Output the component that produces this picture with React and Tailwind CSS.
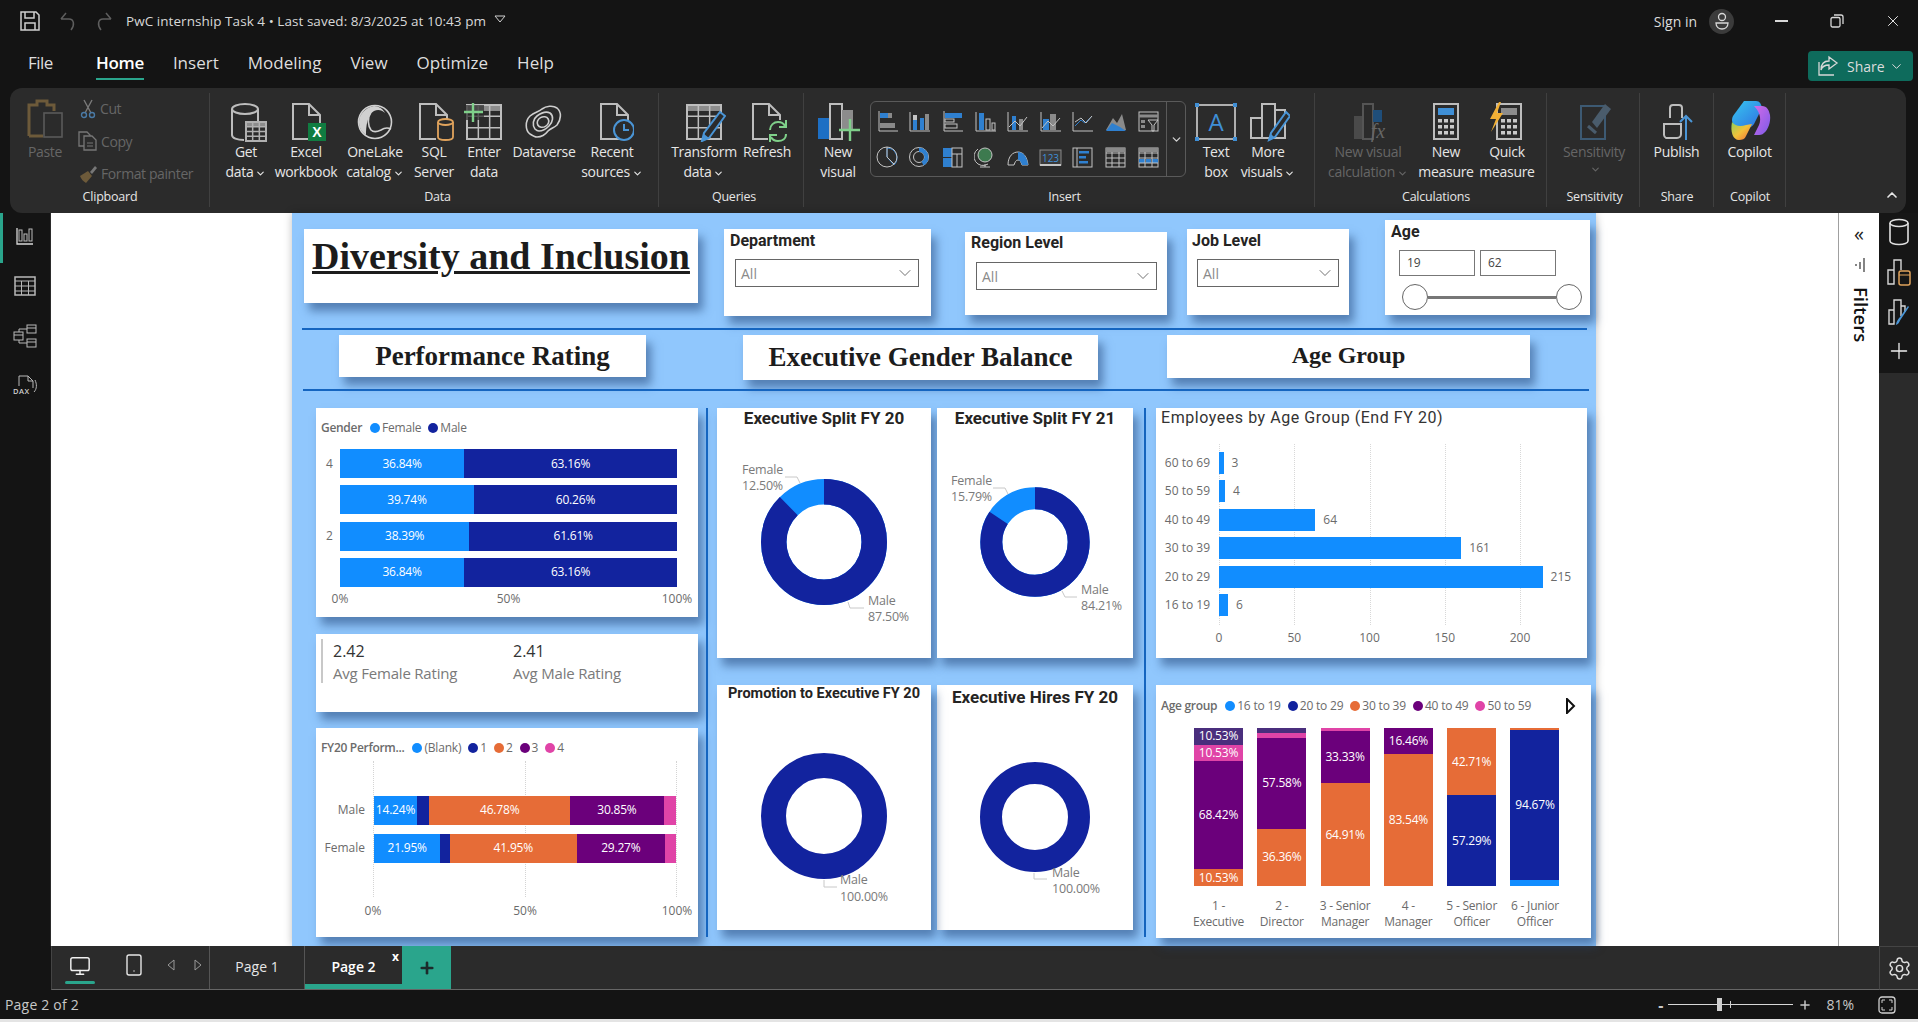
import React from 'react';
import { ChevronDown, ChevronUp, Monitor, Smartphone, Settings, Plus, X } from 'lucide-react';

const BLUE = '#118DFF';
const NAVY = '#12239E';
const ORANGE = '#E66C37';
const PURPLE = '#6B007B';
const PINK = '#E044A7';
const SLATE = '#4A2E7D';

const LINE = '#bdbdbd';
const ACC = '#3f8fd6';

const cardShadow = 'shadow-[5px_8px_9px_rgba(35,70,120,0.55)]';

function Doc({ x = 8 }) {
    return <path d={`M${x} 2h16l11 11v24H${x}z M${x + 16} 2v11h11`} fill="none" stroke={LINE} strokeWidth="2" />;
}

function GridLines({ x, y, w, h, cols = 3, rows = 3, color = LINE }) {
    const out = [];
    for (let i = 1; i < cols; i++) out.push(<path key={'c' + i} d={`M${x + (w * i) / cols} ${y}v${h}`} stroke={color} strokeWidth="1.5" />);
    for (let i = 1; i < rows; i++) out.push(<path key={'r' + i} d={`M${x} ${y + (h * i) / rows}h${w}`} stroke={color} strokeWidth="1.5" />);
    return <g>{out}<rect x={x} y={y} width={w} height={h} fill="none" stroke={color} strokeWidth="2" /></g>;
}

function Ico({ children, w = 44 }) {
    return <svg width={w} height="40" viewBox={`0 0 ${w} 40`} fill="none" className="block">{children}</svg>;
}

const icons = {
    getData: (
        <Ico>
            <ellipse cx="21" cy="7" rx="13" ry="5" stroke={LINE} strokeWidth="2" />
            <path d="M8 7v26c0 3 5 5 12 5" stroke={LINE} strokeWidth="2" />
            <path d="M34 7v12" stroke={LINE} strokeWidth="2" />
            <rect x="22" y="20" width="20" height="19" fill="#2b2b2b" />
            <rect x="22" y="20" width="20" height="5" fill="#8c8c8c" />
            <GridLines x={22} y={20} w={20} h={19} cols={3} rows={4} color="#b0b0b0" />
        </Ico>
    ),
    excel: (
        <Ico>
            <Doc x={9} />
            <rect x="24" y="21" width="18" height="18" fill="#107c41" />
            <text x="33" y="35" textAnchor="middle" fontSize="14" fontWeight="700" fill="#fff" fontFamily="Liberation Sans">X</text>
        </Ico>
    ),
    oneLake: (
        <Ico>
            <circle cx="22" cy="20" r="16.5" stroke="#d0d0d0" strokeWidth="1.6" />
            <path d="M21 4c-8 1-15 8-15 16 0 6 3 10 7 13 0-8 1-20 8-24 4-2 8-1 11 2-2-4-6-7-11-7z" fill="#d0d0d0" />
            <path d="M18 10c-4 6-3 14 0 18 3 3 6 2 10 0 3-2 6-3 10-1" stroke="#d0d0d0" strokeWidth="1.6" />
        </Ico>
    ),
    sql: (
        <Ico>
            <Doc x={8} />
            <rect x="24" y="17" width="19" height="23" fill="#2b2b2b" />
            <ellipse cx="33.5" cy="20" rx="7.5" ry="3" stroke="#e0a35c" strokeWidth="1.8" />
            <path d="M26 20v15c0 2 3 3 7.5 3s7.500-1 7.500-3V20" stroke="#e0a35c" strokeWidth="1.8" />
        </Ico>
    ),
    enter: (
        <Ico>
            <rect x="5" y="3" width="34" height="6" fill="#8c8c8c" />
            <GridLines x={5} y={3} w={34} h={34} cols={3} rows={3} />
            <rect x="2" y="3" width="20" height="15" fill="#2b2b2b" opacity="0.7" />
            <path d="M11 1v19M2 10h19" stroke="#7fd08a" strokeWidth="2.4" />
        </Ico>
    ),
    dataverse: (
        <Ico>
            <path d="M8 32C3 28 3 19 8 14c4-4 9-4 12-7 4-3 11-4 15-1 5 4 4 12 0 17-3 3-6 3-9 6-3 4-7 6-11 6-2 0-4-1-7-3z" stroke="#cfcfcf" strokeWidth="1.6" />
            <path d="M13 27c-3-4-2-10 2-13 4-3 9-5 13-3 4 3 3 9-1 13-3 3-7 5-10 5-1 0-3-1-4-2z" stroke="#cfcfcf" strokeWidth="1.6" />
            <ellipse cx="21" cy="20" rx="6" ry="5" stroke="#cfcfcf" strokeWidth="1.6" transform="rotate(-30 21 20)" />
        </Ico>
    ),
    recent: (
        <Ico>
            <Doc x={11} />
            <circle cx="34" cy="28" r="10" fill="#2b2b2b" stroke="#4a95d6" strokeWidth="2" />
            <path d="M34 22v6h5" stroke="#4a95d6" strokeWidth="2" />
        </Ico>
    ),
    transform: (
        <Ico>
            <rect x="5" y="3" width="34" height="6" fill="#8c8c8c" />
            <GridLines x={5} y={3} w={34} h={34} cols={3} rows={3} />
            <path d="M38 10l5 4-16 22-7 3 2-8z" fill="#2b2b2b" stroke="#4a95d6" strokeWidth="2" />
            <path d="M20 39l2-7 5 4z" fill="#4a95d6" />
        </Ico>
    ),
    refresh: (
        <Ico>
            <Doc x={8} />
            <rect x="23" y="18" width="21" height="22" fill="#2b2b2b" />
            <path d="M25 28c0-5 4-8 8-8 3 0 6 2 7 4M41 32c0 5-4 7-8 7-3 0-6-2-7-4" stroke="#7fd08a" strokeWidth="2" />
            <path d="M41 18v7h-7M25 40v-7h7" stroke="#7fd08a" strokeWidth="2" />
        </Ico>
    ),
    newVisual: (
        <Ico>
            <rect x="2" y="16" width="12" height="21" fill="#1d6fc4" />
            <rect x="14" y="2" width="12" height="35" stroke={LINE} strokeWidth="2" />
            <rect x="26" y="8" width="11" height="20" fill="#8c8c8c" />
            <path d="M34 17v22M23 28h21" stroke="#7fd08a" strokeWidth="2.4" />
        </Ico>
    ),
    textBox: (
        <Ico>
            <rect x="3" y="3" width="38" height="34" stroke="#d0d0d0" strokeWidth="1.6" />
            <rect x="1" y="1" width="4" height="4" fill={ACC} />
            <rect x="39" y="1" width="4" height="4" fill={ACC} />
            <rect x="1" y="35" width="4" height="4" fill={ACC} />
            <rect x="39" y="35" width="4" height="4" fill={ACC} />
            <text x="22" y="29" textAnchor="middle" fontSize="24" fill={ACC} fontFamily="Open Sans">A</text>
        </Ico>
    ),
    moreVisuals: (
        <Ico>
            <path d="M5 36V16h11V36zM16 36V2h13v34M29 8h10v28H16" stroke={LINE} strokeWidth="2" />
            <path d="M40 10l4 4-15 21-6 3 2-7z" fill="#2b2b2b" stroke="#4a95d6" strokeWidth="2" />
            <path d="M23 39l2-7 4 4z" fill="#4a95d6" />
        </Ico>
    ),
    calcVisual: (
        <Ico>
            <rect x="8" y="14" width="9" height="23" fill="#4a4a4a" />
            <rect x="17" y="2" width="10" height="35" stroke="#555" strokeWidth="2" />
            <rect x="27" y="8" width="9" height="12" fill="#1f4e7a" />
            <text x="32" y="36" textAnchor="middle" fontSize="20" fontStyle="italic" fill="#666" fontFamily="Liberation Serif">fx</text>
        </Ico>
    ),
    measure: (
        <Ico>
            <rect x="10" y="2" width="24" height="35" stroke={LINE} strokeWidth="2" />
            <rect x="14" y="6" width="16" height="7" fill={ACC} />
            {[17, 23, 29].map(y => [14, 20, 26].map(x => <rect key={x + '-' + y} x={x} y={y} width="4" height="3.500" fill="#c9c9c9" />))}
        </Ico>
    ),
    quick: (
        <Ico>
            <rect x="12" y="2" width="24" height="35" stroke={LINE} strokeWidth="2" />
            <rect x="16" y="6" width="16" height="7" fill="#8c8c8c" />
            {[17, 23, 29].map(y => [16, 22, 28].map(x => <rect key={x + '-' + y} x={x} y={y} width="4" height="3.500" fill="#c9c9c9" />))}
            <path d="M14 0L5 17h6L6 30 18 11h-6l4-11z" fill="#f2b035" />
        </Ico>
    ),
    sensitivity: (
        <Ico>
            <path d="M9 4h24v33H9z" stroke="#3d5a73" strokeWidth="2" />
            <path d="M20 20L33 2l6 5-14 19z" fill="#4a5c6c" />
            <path d="M16 24l8 7" stroke="#4a5c6c" strokeWidth="3" />
        </Ico>
    ),
    publish: (
        <Ico>
            <path d="M15 16V6a3 3 0 013-3h6a3 3 0 013 3v10" stroke={LINE} strokeWidth="2" />
            <path d="M9 22h17v10a4 4 0 01-4 4H11a4 4 0 01-2-3z" stroke={LINE} strokeWidth="2" />
            <path d="M31 38V14M25 20l6-6 6 6" stroke="#4a95d6" strokeWidth="2" />
        </Ico>
    ),
    copilot: (
        <svg width="44" height="42" viewBox="0 0 44 42" className="block">
            <defs>
                <linearGradient id="cpA" x1="0" y1="0" x2="1" y2="1">
                    <stop offset="0" stopColor="#37c7f0" />
                    <stop offset="1" stopColor="#2f6fe0" />
                </linearGradient>
                <linearGradient id="cpB" x1="0" y1="0" x2="1" y2="1">
                    <stop offset="0" stopColor="#d36be8" />
                    <stop offset="1" stopColor="#7b5be8" />
                </linearGradient>
                <linearGradient id="cpC" x1="0" y1="0" x2="1" y2="1">
                    <stop offset="0" stopColor="#8fd05a" />
                    <stop offset="0.5" stopColor="#f2c13a" />
                    <stop offset="1" stopColor="#ef6a3a" />
                </linearGradient>
            </defs>
            <path d="M16 1h12c4 0 5 3 6 7l-8 16c-2 3-5 4-8 4H8C4 24 3 20 5 16z" fill="url(#cpA)" />
            <path d="M26 6h8c5 0 7 4 8 9 1 7-2 15-6 18-2 2-4 2-7 2h-3l5-10c3-7 0-14-5-19z" fill="url(#cpB)" />
            <path d="M4 22c3 4 8 5 14 3l6-1-6 12c-1 3-4 4-7 4-6 0-9-8-7-18z" fill="url(#cpC)" />
        </svg>
    ),
};

function RibbonButton({ icon, lines, caret, className, dim }) {
    return (
        <div className={`flex flex-col items-center shrink-0 ${className}`}>
            <div className="h-[44px] flex items-end justify-center">{icons[icon]}</div>
            <div className={`flex flex-col items-center text-[14px] leading-[20px] whitespace-nowrap ${dim ? 'text-[#666]' : 'text-[#e6e6e6]'}`}>
                <span className="tracking-[-0.3px]">{lines[0]}</span>
                <span className="tracking-[-0.3px] flex items-center">
                    {lines[1]}
                    {caret && <ChevronDown size={11} strokeWidth={2.5} className="ml-[2px] mt-[2px]" />}
                </span>
            </div>
        </div>
    );
}

function RibbonGroup({ label, className, children }) {
    return (
        <div className={`relative h-full shrink-0 ${className}`}>
            <div className="flex h-[100px] pt-[10px]">{children}</div>
            <div className="text-[12.5px] leading-[18px] text-center text-[#e6e6e6] tracking-[-0.2px]">{label}</div>
            <div className="absolute right-0 top-[5px] bottom-[6px] w-px bg-[#404040]" />
        </div>
    );
}

function GalleryIcon({ i }) {
    const g = '#8a8a8a';
    const l = '#c4c4c4';
    const b = '#2f80d0';
    const all = [
        <g key="0"><path d="M3 1v20h19" stroke={l} /><rect x="4" y="3" width="8" height="5" fill={b} /><rect x="12" y="3" width="4" height="5" fill={g} /><rect x="4" y="13" width="5" height="5" fill={g} /><rect x="9" y="13" width="10" height="5" fill={g} /></g>,
        <g key="1"><path d="M2 2v19h20" stroke={l} /><rect x="5" y="10" width="4" height="10" fill={b} /><rect x="5" y="5" width="4" height="5" fill={l} /><rect x="12" y="8" width="4" height="12" fill={b} /><rect x="17" y="4" width="4" height="16" fill={g} /></g>,
        <g key="2"><path d="M3 1v20h19" stroke={l} /><rect x="4" y="3" width="17" height="5" fill={b} /><rect x="4" y="9" width="9" height="3" stroke={l} /><rect x="4" y="14" width="12" height="4" stroke={l} /></g>,
        <g key="3"><path d="M2 2v19h20" stroke={l} /><rect x="5" y="3" width="5" height="17" fill={b} /><rect x="12" y="9" width="4" height="11" stroke={l} /><rect x="18" y="13" width="3" height="7" stroke={l} /></g>,
        <g key="4"><path d="M2 2v19h20" stroke={l} /><rect x="6" y="6" width="4" height="14" fill={b} /><rect x="13" y="9" width="4" height="11" fill={g} /><path d="M3 17l6-6 5 5 7-9" stroke={l} /></g>,
        <g key="5"><path d="M2 2v19h20" stroke={l} /><rect x="4" y="9" width="6" height="11" fill={b} /><rect x="11" y="4" width="6" height="16" fill={g} /><path d="M3 18l6-7 5 5 7-8" stroke={l} /></g>,
        <g key="6"><path d="M2 2v19h20" stroke={l} /><path d="M4 16l6-6 4 3 7-7" stroke={b} /><path d="M4 12l6-4 5 5 6-7" stroke={l} /></g>,
        <g key="7"><path d="M2 20L9 8l4 5 5-9 4 16z" fill={g} /><path d="M2 21l6-8 4 2 4 2 6 4z" fill={b} /></g>,
        <g key="8"><rect x="2" y="2" width="19" height="19" stroke={l} /><path d="M2 6h19" stroke={g} strokeWidth="3" /><path d="M11 10h10l-4 5v6h-2v-6z" stroke={l} /><rect x="4" y="10" width="4" height="3" fill={g} /><rect x="4" y="15" width="4" height="3" fill={g} /></g>,
        <g key="9"><path d="M11 11V2a10 10 0 017 17z" stroke={b} /><circle cx="11" cy="11" r="10" stroke={l} /><path d="M11 1v10l7 7" stroke={l} /></g>,
        <g key="10"><circle cx="11" cy="11" r="9.500" stroke={l} /><circle cx="11" cy="11" r="5.500" stroke={l} /><path d="M11 1.500a9.500 9.500 0 019.500 9.500 9.500 9.500 0 01-5 8.500l-2-4a5 5 0 00-2.500-9.500z" fill={b} /></g>,
        <g key="11"><rect x="2" y="2" width="9" height="9" fill={b} /><rect x="2" y="12" width="9" height="9" fill={b} /><rect x="11" y="2" width="10" height="19" stroke={l} /><path d="M11 8h10M16 8v13" stroke={l} /></g>,
        <g key="12"><circle cx="11" cy="9" r="7" fill="#3d7a4f" stroke={l} /><path d="M4 3a9 9 0 0010 15M11 18v3M6 21h10" stroke={l} /></g>,
        <g key="13"><path d="M2 19c0-9 5-13 10-13s9 4 10 13h-6c-1-3-2-5-4-5s-3 2-4 5z" stroke={l} /><path d="M12 6c5 0 9 4 10 13h-6c-1-3-2-5-4-5z" fill={b} /></g>,
        <g key="14"><rect x="1" y="4" width="21" height="15" fill="#3a3a3a" stroke={g} /><path d="M1 19h21" stroke={l} strokeWidth="2" /><text x="11.500" y="16" textAnchor="middle" fontSize="10" fill={ACC} fontFamily="Open Sans">123</text></g>,
        <g key="15"><rect x="2" y="2" width="19" height="19" stroke={l} /><path d="M6 2v19" stroke={l} /><rect x="8" y="5" width="10" height="2.500" fill={b} /><rect x="8" y="10" width="7" height="2.500" fill={b} /><rect x="8" y="15" width="9" height="2.500" fill={b} /></g>,
        <g key="16"><rect x="2" y="2" width="19" height="19" stroke={l} /><path d="M2 7h19M2 12h19M2 17h19M8 2v19M15 2v19" stroke={l} /><rect x="2" y="2" width="19" height="4" fill={g} /></g>,
        <g key="17"><rect x="2" y="2" width="19" height="19" stroke={l} /><rect x="2" y="2" width="19" height="4" fill={g} /><rect x="2" y="13" width="6" height="4" fill={b} /><rect x="9" y="13" width="5" height="4" fill={b} /><rect x="15" y="13" width="6" height="4" fill={b} /><path d="M2 7h19M2 12h19M2 17h19M8 6v15M15 6v15" stroke={l} /></g>,
    ];
    return <svg width="23" height="23" viewBox="0 0 23 23" fill="none" className="block">{all[i]}</svg>;
}

function Ribbon() {
    return (
        <div className="ml-[10px] w-[1896px] h-[125px] rounded-xl bg-[#2b2b2b] flex shrink-0">
            <RibbonGroup label="Clipboard" className="w-[200px]">
                <div className="flex text-[#666] text-[14px]">
                    <div className="w-[70px] flex flex-col items-center">
                        <svg width="38" height="42" viewBox="0 0 38 42" fill="none" className="block">
                            <path d="M3 38V7h8V3h10v4h7v6" stroke="#6d5a3a" strokeWidth="3" />
                            <path d="M3 38h14" stroke="#6d5a3a" strokeWidth="3" />
                            <rect x="18" y="15" width="18" height="24" stroke="#5a5a5a" strokeWidth="1.6" />
                        </svg>
                        <span className="mt-[2px] leading-[20px] tracking-[-0.3px]">Paste</span>
                    </div>
                    <div className="flex flex-col gap-[11.500px] tracking-[-0.4px]">
                        <div className="flex items-center gap-[4px] h-[21px]">
                            <svg width="16" height="20" viewBox="0 0 16 20" fill="none" className="block"><path d="M4 1l7 13M12 1L5 14" stroke="#7a7a7a" strokeWidth="1.4" /><circle cx="4" cy="16" r="2.500" stroke="#4a7aa6" strokeWidth="1.4" /><circle cx="12" cy="16" r="2.500" stroke="#4a7aa6" strokeWidth="1.4" /></svg>
                            <span>Cut</span>
                        </div>
                        <div className="flex items-center gap-[3px] -ml-[2px] h-[21px]">
                            <svg width="20" height="20" viewBox="0 0 20 20" fill="none" className="block"><path d="M1 1h8l3 3v11H1z" stroke="#777" strokeWidth="1.3" /><path d="M6 5h8l4 4v10H6z" fill="#2b2b2b" stroke="#777" strokeWidth="1.3" /><path d="M9 12h6M9 15h6" stroke="#777" /></svg>
                            <span>Copy</span>
                        </div>
                        <div className="flex items-center gap-[3px] -ml-[2px] h-[21px]">
                            <svg width="20" height="20" viewBox="0 0 20 20" fill="none" className="block"><path d="M12 8l5-6 2 2-5 6z" fill="#777" /><path d="M2 12l8-5 4 5-6 7c-3-2-5-4-6-7z" fill="#6d5a3a" /></svg>
                            <span className="whitespace-nowrap">Format painter</span>
                        </div>
                    </div>
                </div>
            </RibbonGroup>

            <RibbonGroup label="Data" className="w-[449px] pl-[6px]">
                <RibbonButton icon="getData" lines={['Get', 'data']} caret className="w-[60px]" />
                <RibbonButton icon="excel" lines={['Excel', 'workbook']} className="w-[60px]" />
                <RibbonButton icon="oneLake" lines={['OneLake', 'catalog']} caret className="w-[78px]" />
                <RibbonButton icon="sql" lines={['SQL', 'Server']} className="w-[40px]" />
                <RibbonButton icon="enter" lines={['Enter', 'data']} className="w-[60px]" />
                <RibbonButton icon="dataverse" lines={['Dataverse', '']} className="w-[60px]" />
                <RibbonButton icon="recent" lines={['Recent', 'sources']} caret className="w-[76px]" />
            </RibbonGroup>

            <RibbonGroup label="Queries" className="w-[145px] pl-[5px]">
                <RibbonButton icon="transform" lines={['Transform', 'data']} caret className="w-[80px]" />
                <RibbonButton icon="refresh" lines={['Refresh', '']} className="w-[46px]" />
            </RibbonGroup>

            <RibbonGroup label="Insert" className="w-[511px] pl-[10px]">
                <RibbonButton icon="newVisual" lines={['New', 'visual']} className="w-[48px]" />
                <div className="ml-[8px] mt-[3px] w-[316px] h-[76px] rounded-md border border-[#5a5a5a] flex shrink-0">
                    <div className="grid grid-cols-[repeat(9,32.6px)] grid-rows-2 place-items-center w-[295px] py-[1px]">
                        {Array.from({ length: 18 }, (_, i) => <GalleryIcon key={i} i={i} />)}
                    </div>
                    <div className="flex-1 border-l border-[#5a5a5a] flex items-center justify-center">
                        <ChevronDown size={13} strokeWidth={2.5} color="#d0d0d0" />
                    </div>
                </div>
                <RibbonButton icon="textBox" lines={['Text', 'box']} className="w-[40px] ml-[10px]" />
                <RibbonButton icon="moreVisuals" lines={['More', 'visuals']} caret className="w-[64px]" />
            </RibbonGroup>

            <RibbonGroup label="Calculations" className="w-[232px] pl-[10px]">
                <RibbonButton icon="calcVisual" lines={['New visual', 'calculation']} caret dim className="w-[86px]" />
                <RibbonButton icon="measure" lines={['New', 'measure']} className="w-[70px]" />
                <RibbonButton icon="quick" lines={['Quick', 'measure']} className="w-[52px]" />
            </RibbonGroup>

            <RibbonGroup label="Sensitivity" className="w-[93px] pl-[2px]">
                <RibbonButton icon="sensitivity" lines={['Sensitivity', '']} caret dim className="w-[90px]" />
            </RibbonGroup>

            <RibbonGroup label="Share" className="w-[74px]">
                <RibbonButton icon="publish" lines={['Publish', '']} className="w-[73px]" />
            </RibbonGroup>

            <RibbonGroup label="Copilot" className="w-[72px]">
                <RibbonButton icon="copilot" lines={['Copilot', '']} className="w-[71px]" />
            </RibbonGroup>

            <div className="flex-1 flex items-end justify-end pb-[10px] pr-[6px]">
                <ChevronUp size={16} strokeWidth={2.5} color="#e6e6e6" />
            </div>
        </div>
    );
}

function TitleBar() {
    return (
        <div className="h-[44px] flex items-center shrink-0 text-[#e6e6e6] relative pb-[2px]">
            <svg width="20" height="20" viewBox="0 0 20 20" fill="none" className="ml-[20px] block"><path d="M1 1h15l3 3v15H1z" stroke="#d0d0d0" strokeWidth="1.5" /><path d="M5 1v6h9V1M5 19v-7h10v7" stroke="#d0d0d0" strokeWidth="1.5" /></svg>
            <svg width="18" height="20" viewBox="0 0 18 20" fill="none" className="ml-[19px] block"><path d="M2 8l5-6M2 8h8c5 0 6 6 2 11" stroke="#5e5e5e" strokeWidth="1.500" /></svg>
            <svg width="18" height="20" viewBox="0 0 18 20" fill="none" className="ml-[18px] block"><path d="M16 8l-5-6M16 8H8C3 8 2 14 6 19" stroke="#5e5e5e" strokeWidth="1.500" /></svg>
            <span className="ml-[13px] text-[13.5px] text-[#d8d8d8] tracking-[0.05px] whitespace-nowrap">PwC internship Task 4 • Last saved: 8/3/2025 at 10:43 pm</span>
            <svg width="12" height="8" viewBox="0 0 12 8" fill="none" className="ml-[8px] mb-[4px] block"><path d="M1 1h10L6 7z" stroke="#d0d0d0" /></svg>
            <div className="ml-auto flex items-center">
                <span className="text-[14px] text-[#dcdcdc] mr-[12px]">Sign in</span>
                <div className="w-[25px] h-[25px] rounded-full bg-[#3b3b3b] flex items-center justify-center">
                    <svg width="14" height="18" viewBox="0 0 14 18" fill="none" className="block"><circle cx="7" cy="5" r="3.500" stroke="#d8d8d8" strokeWidth="1.300" /><path d="M1 11h12c0 4-3 6-6 6s-6-2-6-6z" stroke="#d8d8d8" strokeWidth="1.300" /></svg>
                </div>
                <div className="w-[13px] h-[1.5px] bg-[#d8d8d8] ml-[41px]" />
                <svg width="14" height="14" viewBox="0 0 14 14" fill="none" className="ml-[42px] block"><rect x="1" y="3.500" width="9" height="9.500" rx="1.500" stroke="#d8d8d8" strokeWidth="1.300" /><path d="M4 1h7a2 2 0 012 2v7" stroke="#d8d8d8" strokeWidth="1.300" /></svg>
                <X size={18} strokeWidth={1.3} color="#e6e6e6" className="ml-[40px] mr-[16px]" />
            </div>
        </div>
    );
}

function TabRow() {
    const tabs = ['Insert', 'Modeling', 'View', 'Optimize', 'Help'];
    return (
        <div className="h-[44px] flex items-center shrink-0 text-[17px] text-[#dedede] relative">
            <span className="ml-[28px] tracking-[-0.5px] mb-[6px]">File</span>
            <div className="ml-[43px] h-full flex flex-col justify-center relative">
                <span className="font-semibold text-white tracking-[-0.3px] mb-[6px]">Home</span>
                <div className="absolute left-0 right-0 bottom-[8px] h-[2px] bg-[#2aa58c]" />
            </div>
            <div className="ml-[29px] flex gap-[29px] mb-[6px]">
                {tabs.map(t => <span key={t} className="tracking-[0px]">{t}</span>)}
            </div>
            <div className="ml-auto mr-[5px] w-[105px] h-[30px] rounded-sm bg-[#0e6b5c] flex items-center text-[14px] text-[#dcdcdc]">
                <svg width="24" height="24" viewBox="0 0 24 24" fill="none" className="ml-[8px] block"><path d="M13 3l8 6-8 6v-4c-4 0-7 2-8 5 0-6 3-9 8-9z" stroke="#d8d8d8" strokeWidth="1.300" /><path d="M3 8v13h15" stroke="#d8d8d8" strokeWidth="1.300" /></svg>
                <span className="ml-[7px]">Share</span>
                <ChevronDown size={15} strokeWidth={1.6} className="ml-[4px]" />
            </div>
        </div>
    );
}

function LeftRail() {
    const box = 'h-[50px] shrink-0 flex items-center justify-center';
    return (
        <div className="w-[51px] shrink-0 bg-[#141414] border-r border-[#2b2b2b] relative flex flex-col items-center">
            <div className="absolute left-0 top-0 h-[50px] w-[3px] bg-[#2aa58c]" />
            <div className={`${box} -mt-[2px]`}>
                <svg width="18" height="18" viewBox="0 0 18 18" fill="none" className="block"><path d="M1 1v16h16" stroke="#d8d8d8" strokeWidth="1.300" /><rect x="3" y="3" width="3" height="11" stroke="#bbb" /><rect x="8" y="7" width="3" height="7" stroke="#bbb" /><rect x="13" y="2" width="3" height="12" stroke="#bbb" /></svg>
            </div>
            <div className={box}>
                <svg width="22" height="20" viewBox="0 0 22 20" fill="none" className="block"><rect x="1" y="1" width="20" height="18" stroke="#b8b8b8" strokeWidth="1.500" /><path d="M1 5h20M1 10h20M1 15h20M7.500 5v14M14.500 5v14" stroke="#b8b8b8" /></svg>
            </div>
            <div className={box}>
                <svg width="24" height="24" viewBox="0 0 24 24" fill="none" className="block"><rect x="1" y="8" width="9" height="8" stroke="#b8b8b8" /><rect x="14" y="1" width="9" height="8" stroke="#b8b8b8" /><rect x="14" y="15" width="9" height="8" stroke="#b8b8b8" /><path d="M6 8V5h8M6 16v3h8M1 11h9M14 4h9M14 18h9" stroke="#b8b8b8" /></svg>
            </div>
            <div className={box}>
                <div className="relative w-[24px] h-[22px]">
                    <svg width="22" height="20" viewBox="0 0 22 20" fill="none" className="block ml-[2px]"><path d="M4 11V1h9l5 5v7M13 1v5h5M20 5c2 4 2 9-1 12" stroke="#b8b8b8" /></svg>
                    <span className="absolute left-0 top-[12px] text-[7.5px] leading-[9px] font-semibold text-[#d0d0d0] tracking-[0.5px]">DAX</span>
                </div>
            </div>
        </div>
    );
}

function Legend({ title, items, className }) {
    return (
        <div className={`flex items-center text-[12px] leading-[16px] text-[#6b6b6b] whitespace-nowrap ${className}`}>
            <span className="font-semibold tracking-[-0.3px]">{title}</span>
            {items.map(([label, color], i) => (
                <span key={label} className={`flex items-center ${i === 0 ? 'ml-[8px]' : 'ml-[7px]'}`}>
                    <span className="w-[10px] h-[10px] rounded-full mr-[2px]" style={{ backgroundColor: color }} />
                    <span className="tracking-[-0.2px]">{label}</span>
                </span>
            ))}
        </div>
    );
}

function AxisTicks({ labels, className }) {
    return (
        <div className={`flex justify-between text-[12px] leading-[16px] text-[#6b6b6b] ${className}`}>
            {labels.map(l => <div key={l} className="w-0 flex justify-center whitespace-nowrap">{l}</div>)}
        </div>
    );
}

function Segment({ pct, color, label }) {
    return (
        <div className="flex items-center justify-center text-white text-[12px] whitespace-nowrap overflow-hidden tracking-[-0.2px]" style={{ width: pct + '%', backgroundColor: color }}>
            {label}
        </div>
    );
}

function GenderCard() {
    const rows = [
        ['4', 36.84, 63.16],
        ['', 39.74, 60.26],
        ['2', 38.39, 61.61],
        ['', 36.84, 63.16],
    ];
    return (
        <div className={`w-[382px] h-[209px] bg-white ${cardShadow} pt-[12px] pl-[5px]`}>
            <Legend title="Gender" items={[['Female', BLUE], ['Male', NAVY]]} />
            <div className="mt-[13px] flex flex-col gap-[7.3px]">
                {rows.map((r, i) => (
                    <div key={i} className="flex h-[29px]">
                        <div className="w-[19px] flex items-center pl-[5px] text-[12px] text-[#6b6b6b]">{r[0]}</div>
                        <div className="w-[337px] flex">
                            <Segment pct={r[1]} color={BLUE} label={r[1].toFixed(2) + '%'} />
                            <Segment pct={r[2]} color={NAVY} label={r[2].toFixed(2) + '%'} />
                        </div>
                    </div>
                ))}
            </div>
            <AxisTicks labels={['0%', '50%', '100%']} className="ml-[19px] w-[337px] mt-[4px]" />
        </div>
    );
}

function KpiCard() {
    return (
        <div className={`mt-[17px] w-[382px] h-[78px] bg-white ${cardShadow} pt-[5px] pl-[5px]`}>
            <div className="border-l-2 border-[#c8c8c8] h-[44px] pl-[10px] flex">
                <div className="w-[180px]">
                    <div className="text-[16px] leading-[24px] text-[#333]">2.42</div>
                    <div className="text-[15px] leading-[20px] text-[#7a7a7a] tracking-[-0.2px]">Avg Female Rating</div>
                </div>
                <div>
                    <div className="text-[16px] leading-[24px] text-[#333]">2.41</div>
                    <div className="text-[15px] leading-[20px] text-[#7a7a7a] tracking-[-0.2px]">Avg Male Rating</div>
                </div>
            </div>
        </div>
    );
}

function RatingCard() {
    const rows = [
        ['Male', [[14.24, BLUE, '14.24%'], [4, NAVY], [46.78, ORANGE, '46.78%'], [30.85, PURPLE, '30.85%'], [4.13, PINK]]],
        ['Female', [[21.95, BLUE, '21.95%'], [3.2, NAVY], [41.95, ORANGE, '41.95%'], [29.27, PURPLE, '29.27%'], [3.63, PINK]]],
    ];
    return (
        <div className={`mt-[16px] w-[382px] h-[209px] bg-white ${cardShadow} pt-[12px] pl-[5px]`}>
            <Legend title="FY20 Perform..." items={[['(Blank)', BLUE], ['1', NAVY], ['2', ORANGE], ['3', PURPLE], ['4', PINK]]} />
            <div className="relative ml-[52px] w-[304px] h-[136px] mt-[5px] flex flex-col justify-center gap-[9px] border-x border-dotted border-[#d4d4d4]">
                <div className="absolute left-1/2 top-0 bottom-0 border-l border-dotted border-[#d4d4d4]" />
                {rows.map(([name, segs]) => (
                    <div key={name} className="relative flex h-[29px]">
                        <span className="absolute right-[100%] pr-[9px] top-[6px] text-[12px] leading-[16px] text-[#6b6b6b]">{name}</span>
                        {segs.map((s, i) => <Segment key={i} pct={s[0]} color={s[1]} label={s[2]} />)}
                    </div>
                ))}
            </div>
            <AxisTicks labels={['0%', '50%', '100%']} className="ml-[52px] w-[304px] mt-[6px]" />
        </div>
    );
}

function Donut({ cx, cy, r, inner, female = 0, labels, leaders }) {
    const stroke = r - inner;
    const mid = (r + inner) / 2;
    const circ = 2 * Math.PI * mid;
    return (
        <svg className="absolute inset-0 w-full h-full block" fill="none">
            <circle cx={cx} cy={cy} r={mid} stroke={female ? BLUE : NAVY} strokeWidth={stroke} />
            {female > 0 && (
                <circle cx={cx} cy={cy} r={mid} stroke={NAVY} strokeWidth={stroke} strokeDasharray={`${circ * (1 - female / 100)} ${circ}`} transform={`rotate(-90 ${cx} ${cy})`} />
            )}
            {leaders.map(p => <polyline key={p} points={p} stroke="#c8c8c8" />)}
            {labels.map(([x, y, t]) => <text key={t} x={x} y={y} fill="#7a7a7a" fontSize="12.5" fontFamily="Open Sans" letterSpacing="-0.2">{t}</text>)}
        </svg>
    );
}

function DonutCard({ title, className, titleClass, donut }) {
    return (
        <div className={`relative bg-white ${cardShadow} ${className}`}>
            <div className={`text-center font-['Roboto',sans-serif] font-bold text-[#252423] whitespace-nowrap ${titleClass}`}>{title}</div>
            <Donut {...donut} />
        </div>
    );
}

function SlicerDrop({ title, className, titleClass, boxClass }) {
    return (
        <div className={`bg-white shrink-0 ${cardShadow} ${className}`}>
            <div className={`font-['Roboto',sans-serif] font-bold text-[16px] leading-[20px] text-[#252423] ${titleClass}`}>{title}</div>
            <div className={`border border-[#666] h-[28px] flex items-center justify-between pl-[5px] pr-[3px] ${boxClass}`}>
                <span className="text-[14px] text-[#8a8a8a]">All</span>
                <ChevronDown size={20} strokeWidth={1} color="#555" />
            </div>
        </div>
    );
}

function AgeCard() {
    return (
        <div className={`ml-[36px] w-[205px] h-[95px] bg-white shrink-0 ${cardShadow} pt-[2px] px-[6px]`}>
            <div className="font-['Roboto',sans-serif] font-bold text-[16px] leading-[20px] text-[#252423]">Age</div>
            <div className="ml-[8px] mt-[8px] flex gap-[5px] text-[12px] text-[#444]">
                <div className="w-[76px] h-[26px] border border-[#777] flex items-center pl-[7px]">19</div>
                <div className="w-[76px] h-[26px] border border-[#777] flex items-center pl-[7px]">62</div>
            </div>
            <div className="mt-[8px] ml-[11px] w-[180px] flex items-center">
                <div className="w-[26px] h-[26px] rounded-full border border-[#666] bg-white shrink-0" />
                <div className="flex-1 h-[3px] bg-[#777]" />
                <div className="w-[26px] h-[26px] rounded-full border border-[#666] bg-white shrink-0" />
            </div>
        </div>
    );
}

function SectionCard({ title, className }) {
    return (
        <div className={`bg-white flex items-center justify-center shrink-0 ${cardShadow} font-['Liberation_Serif',serif] font-bold text-[#1c1c1c] ${className}`}>
            {title}
        </div>
    );
}

function EmployeesCard() {
    const rows = [['60 to 69', 3], ['50 to 59', 4], ['40 to 49', 64], ['30 to 39', 161], ['20 to 29', 215], ['16 to 19', 6]];
    return (
        <div className={`w-[431px] h-[250px] bg-white ${cardShadow}`}>
            <div className="pl-[5px] text-[16px] leading-[20px] font-['Roboto',sans-serif] font-normal text-[#333] tracking-[0.55px]">Employees by Age Group (End FY 20)</div>
            <div className="relative ml-[63px] mt-[16px] w-[301px] h-[181px]">
                {[0, 25, 50, 75, 100].map(left => (
                    <div key={left} className="absolute top-0 bottom-0 border-l border-dotted border-[#d8d8d8]" style={{ left: left + '%' }} />
                ))}
                <div className="relative pt-[8px] flex flex-col gap-[6.4px]">
                    {rows.map(([name, v]) => (
                        <div key={name} className="relative flex items-center h-[22px] whitespace-nowrap">
                            <span className="absolute right-[100%] pr-[9px] text-[12px] text-[#6b6b6b]">{name}</span>
                            <div className="h-full shrink-0" style={{ width: v * 1.505, backgroundColor: BLUE }} />
                            <span className="ml-[8px] text-[12px] text-[#6b6b6b] shrink-0">{v}</span>
                        </div>
                    ))}
                </div>
            </div>
            <AxisTicks labels={['0', '50', '100', '150', '200']} className="ml-[63px] w-[301px] mt-[5px]" />
        </div>
    );
}

function AgeChartCard() {
    const cols = [
        ['1 -', 'Executive', [[10.53, SLATE, '10.53%'], [10.53, PINK, '10.53%'], [68.42, PURPLE, '68.42%'], [10.53, ORANGE, '10.53%']]],
        ['2 -', 'Director', [[3.03, SLATE], [3.03, PINK], [57.58, PURPLE, '57.58%'], [36.36, ORANGE, '36.36%']]],
        ['3 - Senior', 'Manager', [[1.75, PINK], [33.33, PURPLE, '33.33%'], [64.92, ORANGE, '64.91%']]],
        ['4 -', 'Manager', [[16.46, PURPLE, '16.46%'], [83.54, ORANGE, '83.54%']]],
        ['5 - Senior', 'Officer', [[42.71, ORANGE, '42.71%'], [57.29, NAVY, '57.29%']]],
        ['6 - Junior', 'Officer', [[1.33, ORANGE], [94.67, NAVY, '94.67%'], [4, BLUE]]],
    ];
    return (
        <div className={`mt-[27px] w-[435px] h-[253px] bg-white ${cardShadow} pt-[13px] pl-[5px] relative`}>
            <Legend title="Age group" items={[['16 to 19', BLUE], ['20 to 29', NAVY], ['30 to 39', ORANGE], ['40 to 49', PURPLE], ['50 to 59', PINK]]} />
            <svg width="10" height="16" viewBox="0 0 10 16" fill="none" className="absolute left-[410px] top-[13px] block"><path d="M1 1l7 7-7 7z" stroke="#111" strokeWidth="2" /></svg>
            <div className="ml-[33px] mt-[14px] flex gap-[14.300px]">
                {cols.map(([a, b, segs]) => (
                    <div key={b + a} className="w-[49px] flex flex-col items-center">
                        <div className="w-full h-[158px] flex flex-col">
                            {segs.map((s, i) => (
                                <div key={i} className="flex items-center justify-center text-white text-[12px] whitespace-nowrap overflow-hidden tracking-[-0.2px]" style={{ height: s[0] + '%', backgroundColor: s[1] }}>
                                    {s[2]}
                                </div>
                            ))}
                        </div>
                        <div className="mt-[12px] text-[12px] leading-[16px] text-[#6b6b6b] text-center whitespace-nowrap tracking-[-0.2px]">
                            <div>{a}</div>
                            <div>{b}</div>
                        </div>
                    </div>
                ))}
            </div>
        </div>
    );
}

function ReportPage() {
    return (
        <div className="ml-[241px] w-[1304px] h-[733px] bg-[#90c7fd] shadow-[0_0_8px_rgba(0,0,0,0.25)] flex flex-col pt-[7px]">
            <div className="flex items-start h-[96px] pl-[12px]">
                <div className={`mt-[9px] w-[394px] h-[74px] bg-white shrink-0 ${cardShadow} pl-[8px] pt-[4px] font-['Liberation_Serif',serif] font-bold text-[38px] leading-[46px] text-[#1c1c1c] underline whitespace-nowrap`}>
                    Diversity and Inclusion
                </div>
                <SlicerDrop title="Department" className="mt-[9px] ml-[26px] w-[207px] h-[87px] pl-[6px] pt-[2px]" boxClass="ml-[5px] w-[184px] mt-[8px]" />
                <SlicerDrop title="Region Level" className="mt-[12px] ml-[34px] w-[202px] h-[83px] pl-[6px] pt-[1px]" boxClass="ml-[5px] w-[181px] mt-[9px]" />
                <SlicerDrop title="Job Level" className="mt-[9px] ml-[20px] w-[162px] h-[86px] pl-[5px] pt-[2px]" boxClass="ml-[5px] w-[142px] mt-[8px]" />
                <AgeCard />
            </div>
            <div className="mt-[12px] ml-[10px] w-[1285px] h-[2px] bg-[#1565c0]" />
            <div className="mt-[5px] flex items-start h-[45px]">
                <SectionCard title="Performance Rating" className="ml-[47px] w-[307px] h-[42px] text-[27px]" />
                <SectionCard title="Executive Gender Balance" className="ml-[97px] w-[355px] h-[45px] text-[27px]" />
                <SectionCard title="Age Group" className="ml-[69px] w-[363px] h-[43px] text-[24px] pb-[3px]" />
            </div>
            <div className="mt-[9px] ml-[11px] w-[1286px] h-[2px] bg-[#1565c0]" />
            <div className="mt-[17px] flex items-start">
                <div className="ml-[24px] w-[382px] shrink-0 flex flex-col">
                    <GenderCard />
                    <KpiCard />
                    <RatingCard />
                </div>
                <div className="ml-[8px] w-[2px] h-[529px] bg-[#1565c0] shrink-0" />
                <div className="ml-[9px] w-[416px] shrink-0 grid grid-cols-[214px_196px] gap-x-[6px] grid-rows-[250px_245px] gap-y-[27px]">
                    <DonutCard
                        title="Executive Split FY 20"
                        titleClass="text-[17px] leading-[20px]"
                        donut={{
                            cx: 107, cy: 134, r: 63, inner: 37.5, female: 12.5,
                            labels: [[25, 66, 'Female'], [25, 82, '12.50%'], [151, 197, 'Male'], [151, 213, '87.50%']],
                            leaders: ['68,69 80,69 83,75', '131,194 133,200 147,200'],
                        }}
                    />
                    <DonutCard
                        title="Executive Split FY 21"
                        titleClass="text-[17px] leading-[20px]"
                        donut={{
                            cx: 98, cy: 134, r: 54.7, inner: 32.7, female: 15.79,
                            labels: [[14, 77, 'Female'], [14, 93, '15.79%'], [144, 186, 'Male'], [144, 202, '84.21%']],
                            leaders: ['56,80 68,80 71,86', '125,183 128,189 140,189'],
                        }}
                    />
                    <DonutCard
                        title="Promotion to Executive FY 20"
                        className="z-10"
                        titleClass="text-[14.5px] leading-[18px]"
                        donut={{
                            cx: 107, cy: 131, r: 63, inner: 38,
                            labels: [[123, 199, 'Male'], [123, 216, '100.00%']],
                            leaders: ['107,195 107,202 120,202'],
                        }}
                    />
                    <DonutCard
                        title="Executive Hires FY 20"
                        titleClass="text-[17px] leading-[24px]"
                        donut={{
                            cx: 98, cy: 132, r: 55, inner: 33,
                            labels: [[115, 192, 'Male'], [115, 208, '100.00%']],
                            leaders: ['97,188 97,194 110,194'],
                        }}
                    />
                </div>
                <div className="ml-[11px] w-[2px] h-[529px] bg-[#1565c0] shrink-0" />
                <div className="ml-[10px] shrink-0 flex flex-col">
                    <EmployeesCard />
                    <AgeChartCard />
                </div>
            </div>
        </div>
    );
}

function FilterPane() {
    return (
        <div className="w-[41px] shrink-0 bg-white border-l border-[#a0a0a0] flex flex-col items-center pt-[11px] text-[#222]">
            <span className="text-[20px] leading-[20px]">«</span>
            <svg width="14" height="16" viewBox="0 0 14 16" fill="none" className="mt-[13px] ml-[3px] block"><path d="M10 1v14M6 5v7M2 7v2" stroke="#444" strokeWidth="1.300" /></svg>
            <span className="mt-[14px] [writing-mode:vertical-rl] text-[18.5px] font-semibold leading-[22px] text-[#111] ml-[4px]">Filters</span>
        </div>
    );
}

function RightRail() {
    return (
        <div className="w-[39px] shrink-0 bg-[#2b2b2b] flex flex-col">
            <div className="h-[160px] bg-[#161616] flex flex-col items-center pt-[5px] gap-[12px]">
                <svg width="22" height="28" viewBox="0 0 22 28" fill="none" className="block"><ellipse cx="11" cy="5" rx="9" ry="3.500" stroke="#e0e0e0" strokeWidth="1.600" /><path d="M2 5v18c0 2 4 3.500 9 3.500s9-1.500 9-3.500V5" stroke="#e0e0e0" strokeWidth="1.600" /></svg>
                <svg width="24" height="28" viewBox="0 0 24 28" fill="none" className="block"><path d="M1 26V12h6V26zM7 12V2h7v10" stroke="#d8d8d8" strokeWidth="1.400" /><rect x="12" y="13" width="11" height="14" rx="2" stroke="#e0a35c" strokeWidth="1.500" /><path d="M12 17h11" stroke="#e0a35c" /></svg>
                <svg width="24" height="28" viewBox="0 0 24 28" fill="none" className="block"><path d="M2 26V12h5v14zM7 12V2h7v16M14 8h4v6" stroke="#d8d8d8" strokeWidth="1.400" /><path d="M22 9l-8 12c-2 3-2 5-5 6 0-3 2-6 4-8l8-11z" fill="#4a95d6" /></svg>
                <Plus size={26} strokeWidth={1.2} color="#f0f0f0" />
            </div>
        </div>
    );
}

function PageTabs() {
    return (
        <div className="h-[44px] flex shrink-0">
            <div className="w-[51px] shrink-0 bg-[#141414]" />
            <div className="flex-1 bg-[#2b2b2b] border-b border-[#666] border-l border-l-[#444] flex text-[14px] text-[#e6e6e6]">
                <div className="w-[158px] flex items-center border-r border-[#555] relative">
                    <Monitor size={22} strokeWidth={1.6} color="#f0f0f0" className="ml-[17px] mb-[4px]" />
                    <div className="absolute left-[13px] bottom-[5px] w-[30px] h-[3px] rounded-full bg-[#2aa58c]" />
                    <Smartphone size={24} strokeWidth={1.4} color="#e6e6e6" className="ml-[31px] mb-[6px]" />
                    <svg width="8" height="12" viewBox="0 0 8 12" fill="none" className="ml-[21px] mb-[6px] block"><path d="M7 1L1 6l6 5z" stroke="#9a9a9a" /></svg>
                    <svg width="8" height="12" viewBox="0 0 8 12" fill="none" className="ml-[19px] mb-[6px] block"><path d="M1 1l6 5-6 5z" stroke="#9a9a9a" /></svg>
                </div>
                <div className="w-[95px] flex items-center justify-center border-r border-[#555] pb-[2px]">Page 1</div>
                <div className="w-[97px] relative flex items-center justify-center font-semibold text-white border-b-[5px] border-[#2aa58c] pt-[2px]">
                    Page 2
                    <span className="absolute right-[3px] top-[4px] text-[12px] leading-[14px] font-bold">x</span>
                </div>
                <div className="w-[49px] bg-[#2aa58c] flex items-center justify-center">
                    <Plus size={18} strokeWidth={3.5} color="#1c2b2b" />
                </div>
            </div>
            <div className="w-[39px] shrink-0 bg-[#2b2b2b] border-b border-[#666] border-l border-l-[#444] border-t border-t-[#444] flex items-center justify-center">
                <Settings size={25} strokeWidth={1.4} color="#e0e0e0" />
            </div>
        </div>
    );
}

function StatusBar() {
    return (
        <div className="h-[29px] shrink-0 bg-[#141414] flex items-center text-[#c8c8c8] text-[14px]">
            <span className="ml-[5px] tracking-[0.2px]">Page 2 of 2</span>
            <div className="ml-auto flex items-center">
                <span className="font-bold text-[16px] leading-[16px] mr-[5px]">-</span>
                <div className="relative w-[125px] h-px bg-[#d8d8d8] flex items-center">
                    <div className="absolute left-[49px] w-[5px] h-[13px] bg-[#d0d0d0]" />
                    <div className="absolute left-[62px] w-px h-[7px] bg-[#d0d0d0]" />
                </div>
                <Plus size={14} strokeWidth={2.5} className="ml-[5px]" />
                <span className="ml-[14px] text-[14px]">81%</span>
                <svg width="18" height="18" viewBox="0 0 18 18" fill="none" className="ml-[24px] mr-[22px] block"><rect x="1" y="1" width="16" height="16" rx="3" stroke="#d0d0d0" strokeWidth="1.300" /><path d="M4 7V4h3M11 4h3v3M14 11v3h-3M7 14H4v-3" stroke="#d0d0d0" /></svg>
            </div>
        </div>
    );
}

export default function App() {
    return (
        <div className="w-[1918px] h-[1022px] overflow-hidden bg-[#141414] flex flex-col font-['Open_Sans',sans-serif]">
            <TitleBar />
            <TabRow />
            <Ribbon />
            <div className="h-[733px] flex shrink-0">
                <LeftRail />
                <div className="flex-1 bg-white min-w-0">
                    <ReportPage />
                </div>
                <FilterPane />
                <RightRail />
            </div>
            <PageTabs />
            <StatusBar />
            <div className="h-[3px] bg-[#e4e4e4]" />
        </div>
    );
}
